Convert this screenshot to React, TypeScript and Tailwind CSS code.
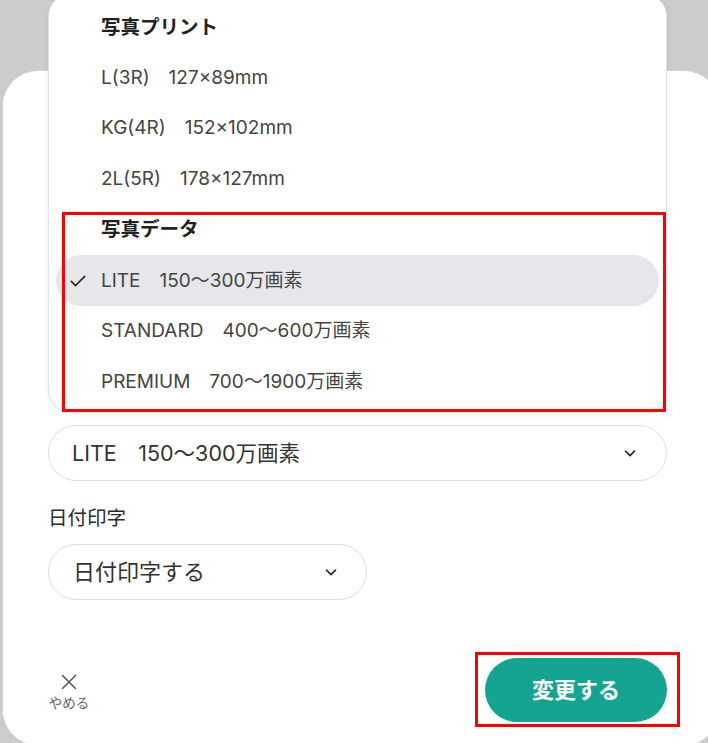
import { useState } from "react";

const printOptions = [
  "L(3R)\u3000127×89mm",
  "KG(4R)\u3000152×102mm",
  "2L(5R)\u3000178×127mm",
];

const dataOptions = [
  "LITE\u3000150〜300万画素",
  "STANDARD\u3000400〜600万画素",
  "PREMIUM\u3000700〜1900万画素",
];

const font = {
  fontFamily: 'Inter, "Noto Sans CJK JP", "Noto Sans", sans-serif',
};

function Chevron() {
  return (
    <svg width="18" height="18" viewBox="0 0 24 24" fill="none">
      <path
        d="M6 9.5l6 6 6-6"
        stroke="#2b2b2b"
        strokeWidth="2.2"
        strokeLinecap="round"
        strokeLinejoin="round"
      />
    </svg>
  );
}

function Check() {
  return (
    <svg width="20" height="20" viewBox="0 0 24 24" fill="none">
      <path
        d="M4 12.5l5 5L20 6.5"
        stroke="#2b2b2b"
        strokeWidth="2"
        strokeLinecap="round"
        strokeLinejoin="round"
      />
    </svg>
  );
}

function MenuHeading({ label }: { label: string }) {
  return (
    <li className="h-[50.7px] flex items-center pl-[52px] text-[19.5px] font-bold text-[#222]">
      {label}
    </li>
  );
}

function MenuItem({
  label,
  selected,
  onPick,
}: {
  label: string;
  selected: boolean;
  onPick: () => void;
}) {
  return (
    <li
      onClick={onPick}
      className={`relative h-[50.7px] flex items-center pl-[45px] mx-[7px] rounded-full text-[19px] text-[#444] cursor-pointer ${
        selected ? "bg-[#e6e7eb]" : ""
      }`}
    >
      {selected && (
        <span className="absolute left-[12px] top-1/2 -translate-y-1/2">
          <Check />
        </span>
      )}
      {label}
    </li>
  );
}

export default function App() {
  const [quality, setQuality] = useState(dataOptions[0]);

  return (
    <div
      className="relative w-[708px] h-[743px] overflow-hidden bg-[#cccccc]"
      style={font}
    >
      {/* bottom sheet */}
      <div className="mt-[70px] ml-[2px] w-[718px] h-[676px] bg-white rounded-[36px] border border-[#d4d4d8] px-[45px] pt-[354px]">
        <button className="w-[619px] h-[56px] flex items-center justify-between pl-[23px] pr-[27px] rounded-full border border-[#dcdde2] bg-white text-[21.5px] text-[#333]">
          <span>{quality}</span>
          <Chevron />
        </button>

        <p className="mt-[24px] text-[19.5px] text-[#2a2a2a] leading-[26px]">
          日付印字
        </p>

        <button className="mt-[13px] w-[319px] h-[56px] flex items-center justify-between pl-[24px] pr-[26px] rounded-full border border-[#dcdde2] bg-white text-[22px] text-[#333]">
          <span>日付印字する</span>
          <Chevron />
        </button>

        <div className="mt-[52px] flex items-center justify-between w-[632px]">
          <button className="flex flex-col items-center w-[42px] gap-[4px] pt-[6px]">
            <svg width="16" height="16" viewBox="0 0 16 16" fill="none">
              <path
                d="M1.5 1.5l13 13M14.5 1.5l-13 13"
                stroke="#555"
                strokeWidth="1.5"
                strokeLinecap="round"
              />
            </svg>
            <span className="text-[13.5px] text-[#666] leading-[18px]">
              やめる
            </span>
          </button>

          <div className="border-[3px] border-[#ff0000] pt-[3px] pb-[2px] pl-[7px] pr-[10px]">
            <button className="w-[182px] h-[64px] rounded-full bg-[#14a592] text-white text-[22px] font-bold">
              変更する
            </button>
          </div>
        </div>
      </div>

      {/* open dropdown menu */}
      <div className="absolute left-[48px] top-[-6px] w-[619px] h-[418px] bg-white rounded-[22px] border border-[#e2e2e6] shadow-[0_2px_6px_rgba(0,0,0,0.08)] pt-[7px]">
        <ul>
          <MenuHeading label="写真プリント" />
          {printOptions.map((opt) => (
            <MenuItem key={opt} label={opt} selected={false} onPick={() => {}} />
          ))}
          <MenuHeading label="写真データ" />
          {dataOptions.map((opt) => (
            <MenuItem
              key={opt}
              label={opt}
              selected={quality === opt}
              onPick={() => setQuality(opt)}
            />
          ))}
        </ul>
        <div className="absolute left-[13px] right-0 top-[217px] h-[200px] border-[3px] border-[#ff0000] pointer-events-none" />
      </div>
    </div>
  );
}
